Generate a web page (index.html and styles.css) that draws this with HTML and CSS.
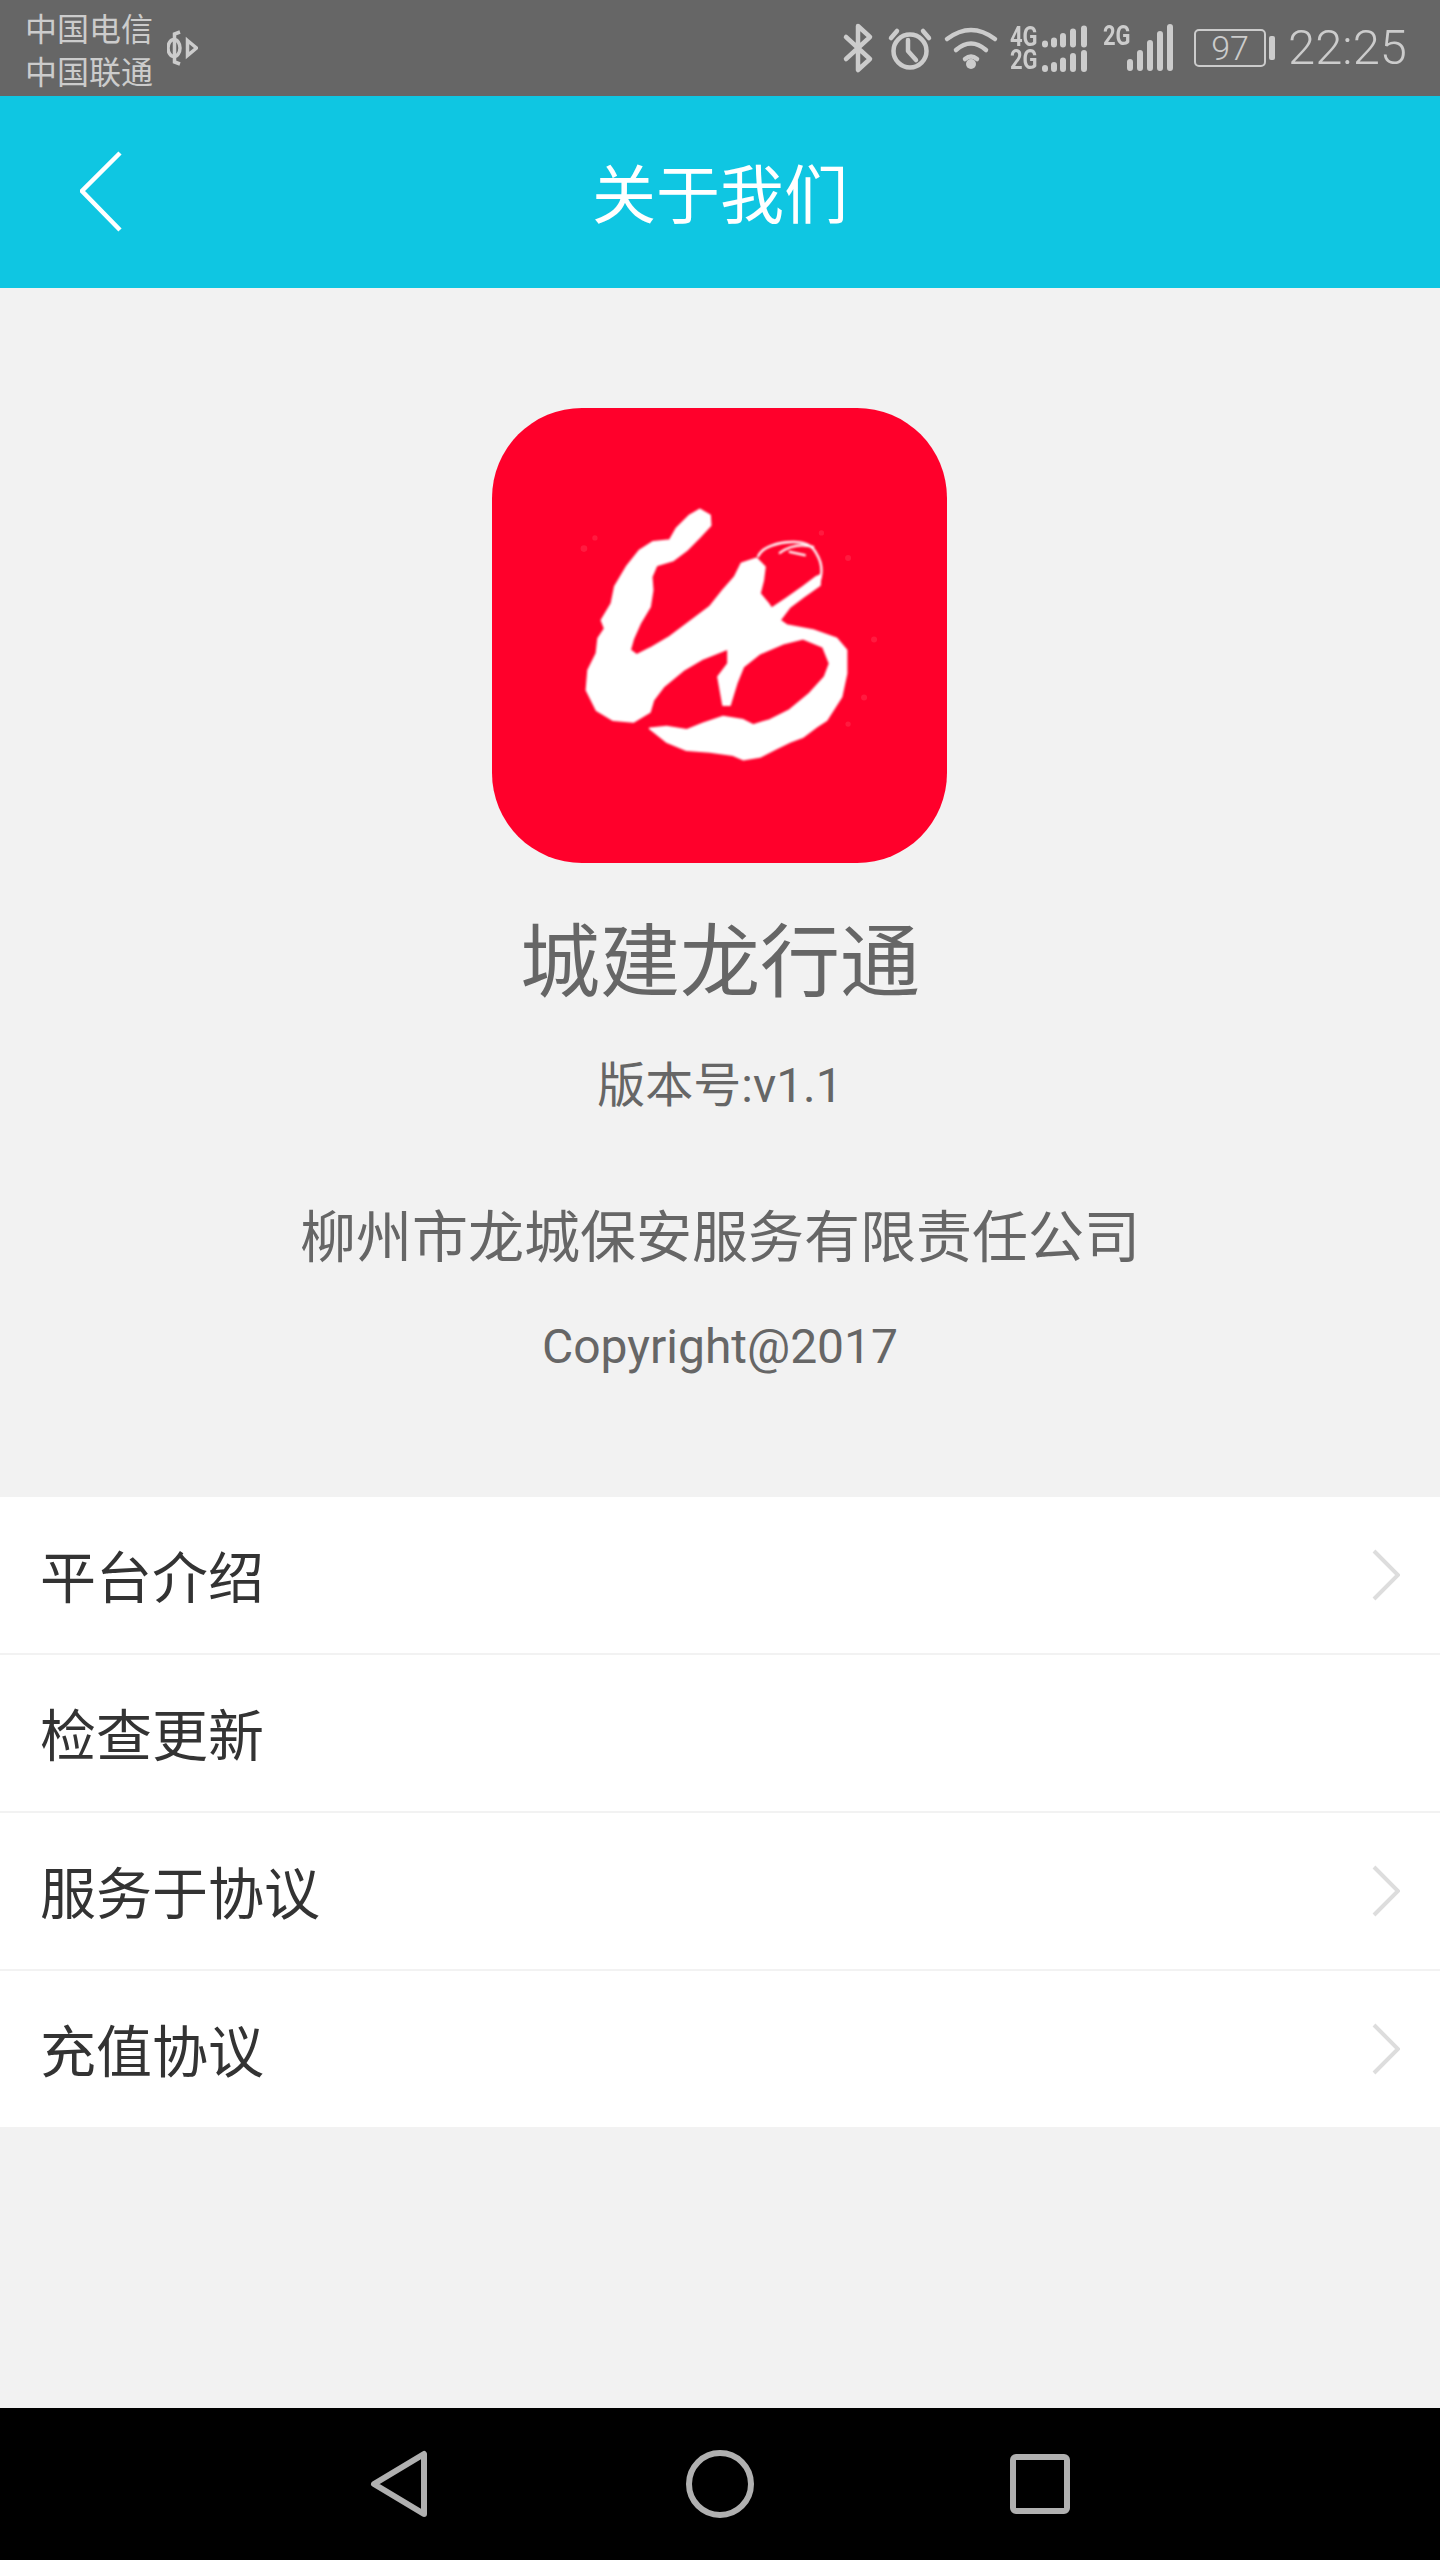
FILE: index.html
```html
<!DOCTYPE html>
<html>

<head>
  <meta charset="utf-8" />
  <title>关于我们</title>
  <meta name="viewport" content="width=device-width, initial-scale=1">
  <link rel="stylesheet" href="styles.css">
</head>

<body>
  <section class="phone">
    <!-- status bar -->
    <section class="status">
      <div class="carriers">
        <div>中国电信</div>
        <div>中国联通</div>
      </div>
      <svg class="hd" width="31" height="36" viewBox="0 0 31 36">
        <ellipse cx="7" cy="18" rx="6" ry="8.5" />
        <path d="M13 2 L7.500 4 V32 L13 34" />
        <path d="M20.500 10.500 L29.500 18 L20.500 25.500 Z" />
      </svg>
      <div class="status-icons">
        <svg width="31" height="46" viewBox="0 0 31 46">
          <path d="M2 12 L26 34 L14 45 V1 L26 12 L2 34" />
        </svg>
        <svg width="44" height="44" viewBox="0 0 44 44">
          <circle cx="22" cy="25" r="16.500" />
          <path d="M20 14 V25 L28 34" />
          <path d="M3 12 L9 5 M41 12 L35 5" />
        </svg>
        <svg width="52" height="42" viewBox="0 0 52 42">
          <path d="M2 12 Q26 -6 50 12" />
          <path d="M11 23 Q26 10 41 23" />
          <path d="M20 32 Q26 27 32 32" />
          <circle class="fill" cx="26" cy="37" r="5" />
        </svg>
        <div class="sim">
          <span class="net net-double">4G<br>2G</span>
          <svg width="54" height="47" viewBox="0 0 54 47">
            <path class="bars" d="M9 19.500 V18.500 M18 19.500 V15.500 M27 19.500 V11 M37 19.500 V6.500 M48 19.500 V3.500" />
            <path class="bars" d="M9 44 V43 M18 44 V40 M27 44 V35.500 M37 44 V31 M48 44 V28" />
          </svg>
        </div>
        <div class="sim-single">
          <span class="net">2G</span>
          <svg width="52" height="46" viewBox="0 0 52 46">
            <path class="bars" d="M1 43 V37 M11 43 V28 M21 43 V18 M31 43 V9 M41 43 V2" />
          </svg>
        </div>
        <div class="battery">
          <div class="battery-body">97</div>
          <div class="battery-tip"></div>
        </div>
        <div class="time">22:25</div>
      </div>
    </section>

    <header class="topbar">
      <svg class="back" width="44" height="82" viewBox="0 0 44 82">
        <path d="M40 2 L2 40 L40 79" />
      </svg>
      <h1>关于我们</h1>
    </header>

    <section class="about">
      <div class="logo">
        <svg width="455" height="455" viewBox="66 53 1366 1366">
          <defs>
            <filter id="soft">
              <feGaussianBlur stdDeviation="3.500" />
            </filter>
          </defs>
          <g filter="url(#soft)">
            <path class="ink" d="M690 358 L720 375 L722 405 L690 440 L650 480 L610 510 L560 525 L545 560 L548 600 L540 650 L510 700 L490 745 L480 780 L500 795 L540 775 L600 740 L660 695 L720 650 L760 600 L795 560 L815 520 L860 505 L885 530 L880 570 L870 610 L895 640 L905 655 L950 625 L1000 590 L1040 560 L1052 555 L1050 585 L1000 620 L960 650 L930 690 L950 705 L1030 720 L1100 745 L1130 780 L1130 850 L1115 920 L1070 990 L1040 1010 L1000 1040 L960 1055 L920 1075 L870 1100 L820 1108 L790 1095 L720 1085 L650 1080 L590 1055 L540 1015 L590 1010 L650 1020 L700 1000 L760 980 L820 990 L850 1005 L900 990 L960 960 L1020 910 L1065 860 L1080 820 L1060 770 L1000 745 L940 760 L870 790 L820 830 L800 880 L780 945 L760 945 L745 860 L775 820 L775 775 L700 805 L640 840 L580 890 L550 930 L540 965 L490 995 L430 990 L380 960 L350 900 L355 840 L380 790 L385 745 L405 715 L395 690 L425 640 L435 590 L470 530 L510 480 L550 455 L600 450 L620 415 L660 375 Z" />
            <path class="strand" d="M865 498 Q880 465 950 456 Q1020 448 1040 490 Q1062 525 1052 565" />
            <path class="strand" d="M930 488 Q975 455 1030 470 M960 485 Q985 490 1005 495" />
          </g>
          <g class="specks">
            <circle cx="342" cy="475" r="10" />
            <circle cx="375" cy="443" r="8" />
            <circle cx="1055" cy="428" r="8" />
            <circle cx="1135" cy="503" r="9" />
            <circle cx="1213" cy="748" r="9" />
            <circle cx="1183" cy="922" r="9" />
            <circle cx="1135" cy="1002" r="8" />
          </g>
        </svg>
      </div>
      <div class="app-name">城建龙行通</div>
      <div class="version">版本号:v1.1</div>
      <div class="company">柳州市龙城保安服务有限责任公司</div>
      <div class="copyright">Copyright@2017</div>
    </section>

    <ul class="menu">
      <li>
        <span>平台介绍</span>
        <svg width="28" height="52" viewBox="0 0 28 52"><path d="M2 2 L26 26 L2 50" /></svg>
      </li>
      <li>
        <span>检查更新</span>
      </li>
      <li>
        <span>服务于协议</span>
        <svg width="28" height="52" viewBox="0 0 28 52"><path d="M2 2 L26 26 L2 50" /></svg>
      </li>
      <li>
        <span>充值协议</span>
        <svg width="28" height="52" viewBox="0 0 28 52"><path d="M2 2 L26 26 L2 50" /></svg>
      </li>
    </ul>

    <section class="spacer"></section>

    <!-- android nav keys -->
    <nav class="keys">
      <svg width="60" height="68" viewBox="0 0 60 68">
        <path d="M54 4 V64 L4 34 Z" />
      </svg>
      <svg width="68" height="68" viewBox="0 0 68 68">
        <circle cx="34" cy="34" r="31" />
      </svg>
      <svg width="60" height="60" viewBox="0 0 60 60">
        <rect x="3" y="3" width="54" height="54" rx="3" />
      </svg>
    </nav>
  </section>
</body>

</html>
```

FILE: styles.css
```css
* { box-sizing: border-box; margin: 0; padding: 0; }
body {
  background: #f2f2f2;
  font-family: Roboto, "Noto Sans CJK SC", sans-serif;
}
.phone {
  display: flex;
  flex-direction: column;
  width: 1440px;
  height: 2560px;
}

/* status bar */
.status {
  display: flex;
  align-items: center;
  height: 96px;
  padding: 0 33px 0 25px;
  background: #666;
  color: #ccc;
}
.carriers {
  margin-top: 7px;
  font-size: 32px;
  line-height: 43px;
}
.hd {
  margin-left: 14px;
}
.hd * {
  fill: none;
  stroke: #ccc;
  stroke-width: 3.500;
}
.status-icons {
  display: flex;
  align-items: center;
  gap: 13px;
  margin-left: auto;
}
.status-icons svg {
  overflow: visible;
}
.status-icons svg * {
  fill: none;
  stroke: #ccc;
  stroke-width: 4.500;
  stroke-linecap: round;
  stroke-linejoin: round;
}
.status-icons svg .fill {
  fill: #ccc;
  stroke: none;
}
.status-icons svg .bars {
  stroke-width: 6;
}
.sim {
  display: flex;
  align-items: center;
  width: 80px;
}
.sim-single {
  display: flex;
  align-items: flex-start;
  width: 78px;
}
.net {
  flex: none;
  width: 26px;
  font-size: 22px;
  font-weight: 700;
  line-height: 22px;
  transform: scaleY(1.250);
}
.net-double {
  line-height: 19px;
}
.battery {
  display: flex;
  align-items: center;
  gap: 3px;
}
.battery-body {
  width: 72px;
  height: 38px;
  border: 2px solid #ccc;
  border-radius: 5px;
  font-size: 34px;
  font-weight: 300;
  line-height: 34px;
  text-align: center;
}
.battery-tip {
  width: 6px;
  height: 24px;
  border-radius: 2px;
  background: #ccc;
}
.time {
  font-size: 49px;
  font-weight: 300;
  line-height: 56px;
}

/* title bar */
.topbar {
  display: grid;
  grid-template-columns: 1fr auto 1fr;
  align-items: center;
  height: 192px;
  padding: 0 80px;
  background: #0fc6e2;
}
.topbar h1 {
  padding-top: 10px;
  color: #fff;
  font-size: 64px;
  font-weight: 400;
  line-height: 80px;
}
.back path {
  fill: none;
  stroke: #fff;
  stroke-width: 4.500;
}

/* app info */
.about {
  display: flex;
  flex-direction: column;
  align-items: center;
  padding: 120px 0 120px;
  color: #666;
}
.logo {
  width: 455px;
  height: 455px;
  margin-left: -1px;
  border-radius: 90px;
  background: #ff002b;
}
.logo svg {
  display: block;
}
.ink {
  fill: #fff;
  stroke: #fff;
  stroke-width: 6;
  stroke-linejoin: round;
}
.strand {
  fill: none;
  stroke: #fff;
  stroke-width: 7;
  stroke-linecap: round;
}
.specks circle {
  fill: #ff1a3f;
}
.app-name {
  margin-top: 50px;
  font-size: 80px;
  line-height: 100px;
}
.version {
  margin-top: 43px;
  font-size: 48px;
  line-height: 60px;
}
.company {
  margin-top: 87px;
  font-size: 56px;
  line-height: 70px;
}
.copyright {
  margin-top: 44px;
  font-size: 48px;
  line-height: 60px;
}

/* menu rows */
.menu {
  list-style: none;
  background: #fff;
}
.menu li {
  display: flex;
  align-items: center;
  justify-content: space-between;
  height: 158px;
  padding: 0 40px 0 40px;
  border-bottom: 2px solid #f2f2f2;
  color: #333;
  font-size: 56px;
}
.menu li span {
  margin-bottom: 3px;
}
.menu li:last-child {
  height: 156px;
  border-bottom: 0;
}
.menu svg path {
  fill: none;
  stroke: #ddd;
  stroke-width: 4;
}
.spacer {
  flex: 1;
}

/* nav keys */
.keys {
  display: flex;
  align-items: center;
  justify-content: center;
  gap: 256px;
  height: 152px;
  background: #000;
}
.keys svg * {
  fill: none;
  stroke: #b0b0b0;
  stroke-width: 6;
  stroke-linejoin: round;
}
```
